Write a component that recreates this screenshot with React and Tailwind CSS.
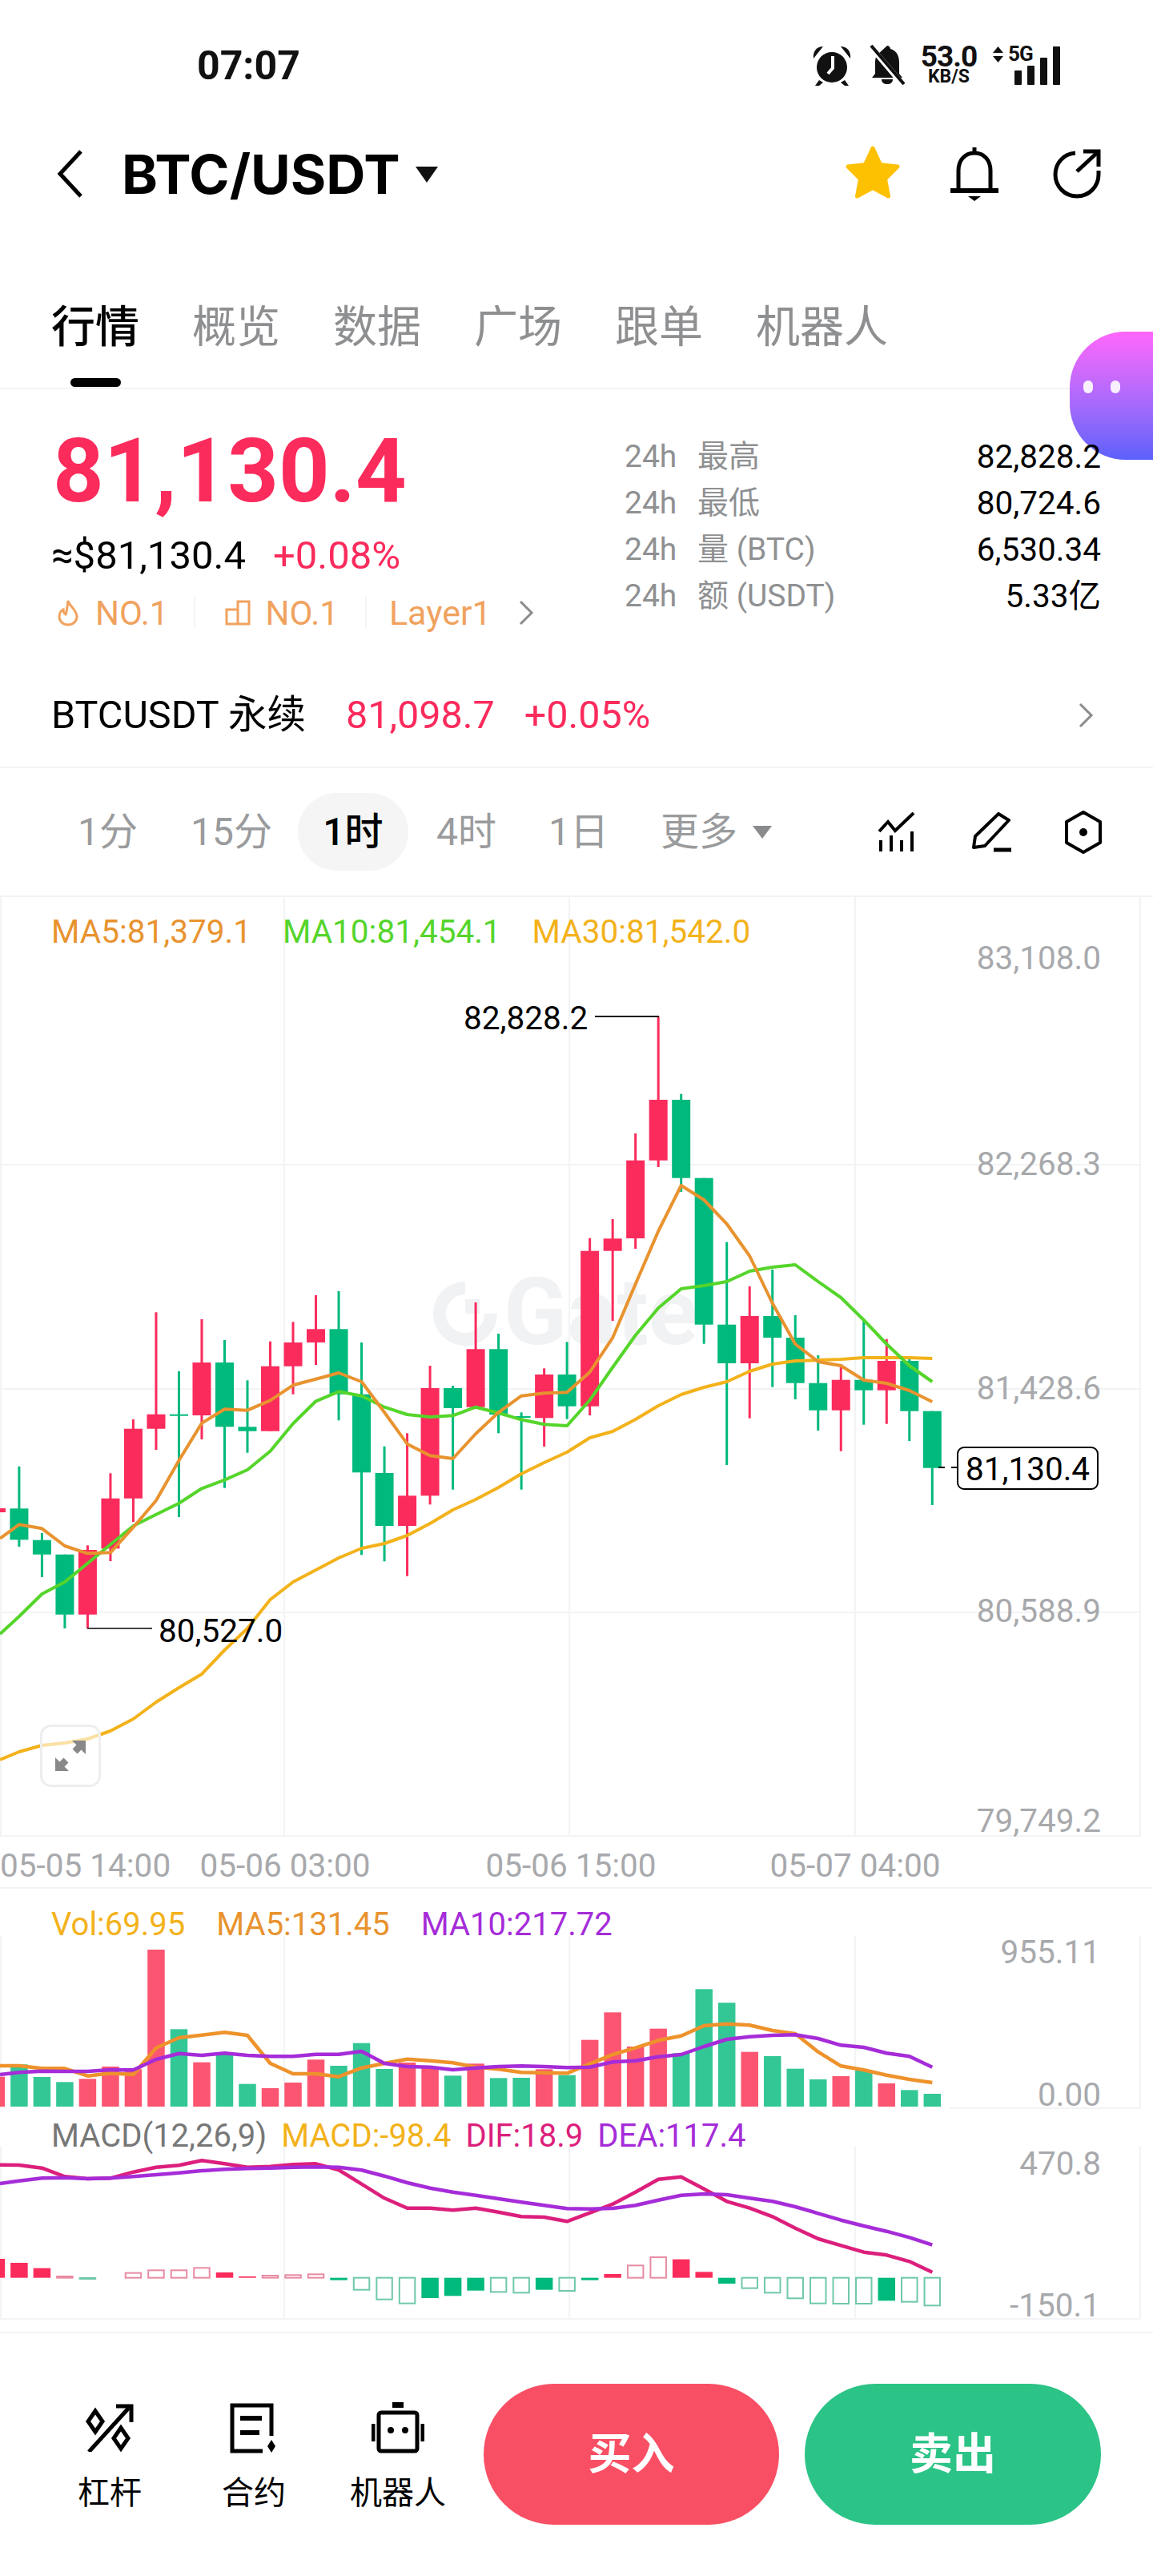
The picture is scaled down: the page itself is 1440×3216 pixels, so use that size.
import React from 'react';

const RED = '#fb2b5c';
const GREEN = '#00b97c';
const AXIS = '#a8a9ac';
const xi = (i) => 23.9 + 28.51 * i;

// [index colour, body top, body bottom, wick top, wick bottom]
const candles = [
  ['r', 1883, 1888, 1883, 1888], ['g', 1883.3, 1922.3, 1830.7, 1931], ['g', 1922.7, 1940.7, 1914, 1969],
  ['g', 1940.7, 2015.7, 1940.7, 2033], ['r', 1935, 2015.7, 1929.3, 2033], ['r', 1870.7, 1933.3, 1839.3, 1949],
  ['r', 1783.7, 1870.7, 1772, 1900], ['r', 1765.7, 1783.7, 1638.3, 1810], ['g', 1765.7, 1767, 1712, 1894],
  ['r', 1701, 1767, 1647, 1797], ['g', 1701, 1781.3, 1673, 1857.7], ['g', 1781.3, 1786.7, 1723.3, 1813.7],
  ['r', 1705.7, 1786.7, 1674.7, 1786.7], ['r', 1676, 1705.7, 1650.3, 1740.7], ['r', 1659.3, 1676, 1617, 1704],
  ['g', 1659.3, 1740.7, 1612, 1773.3], ['g', 1740.7, 1838.3, 1676, 1941.3], ['g', 1839, 1905, 1805.7, 1949.3],
  ['r', 1867.3, 1905, 1789.3, 1967.7], ['r', 1733, 1867.3, 1705, 1878.3], ['g', 1733, 1758, 1730, 1859.7],
  ['r', 1684.3, 1756.7, 1626, 1756.7], ['g', 1684.3, 1766, 1665, 1789.3], ['g', 1768, 1769.3, 1763.3, 1859.7],
  ['r', 1716, 1770.3, 1708.3, 1806], ['g', 1716, 1755.7, 1675.3, 1771.7], ['r', 1561.7, 1755.7, 1545.7, 1767],
  ['r', 1546.3, 1561.7, 1522, 1649], ['r', 1448.7, 1546, 1415, 1559], ['r', 1373, 1448.7, 1269, 1457],
  ['g', 1373, 1470.7, 1365.7, 1488], ['g', 1470.7, 1653.7, 1470.7, 1677.7], ['g', 1653.7, 1702, 1550.7, 1829],
  ['r', 1643, 1702, 1606, 1770.7], ['g', 1643, 1670, 1585, 1731.7], ['g', 1670, 1726.7, 1642, 1747],
  ['g', 1726.7, 1760.7, 1692, 1786], ['r', 1722.7, 1760.7, 1703, 1811.7], ['g', 1722.7, 1735.7, 1648, 1778.7],
  ['r', 1699, 1735.7, 1671.7, 1777.7], ['g', 1699, 1761.7, 1697, 1799], ['g', 1761.7, 1832.7, 1761.7, 1879],
];

const ma5 = [1920.7, 1903.3, 1908.3, 1930, 1939.3, 1938.3, 1906.7, 1873.3, 1823.3, 1776.7, 1759.3, 1760.7, 1748.3, 1729.3, 1721.7, 1714, 1725, 1763.3, 1802.7, 1817.3, 1821, 1790, 1763.3, 1742.7, 1739.3, 1738.3, 1713, 1670, 1603, 1537, 1480, 1498, 1528, 1568, 1627, 1678, 1700, 1705, 1723, 1727, 1736, 1750];
const ma10 = [2040, 2018, 1990, 1975, 1951.7, 1928.3, 1905, 1890.7, 1876.7, 1858.3, 1847.7, 1835, 1811.7, 1777.3, 1749.3, 1737.3, 1742.7, 1756.7, 1766, 1769, 1767.3, 1756.7, 1764, 1772.3, 1778.3, 1780, 1748, 1707, 1667, 1633, 1609, 1605, 1600, 1587, 1582, 1579, 1600, 1620, 1648, 1678, 1705, 1725];
const ma30 = [2197, 2187, 2179, 2176, 2171, 2161, 2146, 2125, 2107, 2090, 2060, 2033, 1997, 1975, 1960, 1945, 1933, 1927, 1917, 1902, 1885, 1872, 1857, 1840, 1826, 1813, 1795, 1787, 1772, 1755, 1741, 1732, 1725, 1712, 1703, 1699, 1698, 1697, 1695, 1695, 1695, 1696];

// volume bars: colour + top, measured against the crop at y=2340 (3x)
const vols = [['r', 758], ['g', 712], ['g', 759], ['g', 778], ['r', 766], ['r', 720], ['r', 730], ['r', 282], ['g', 580], ['r', 704], ['g', 670], ['g', 785], ['r', 801], ['r', 780], ['r', 694], ['g', 717], ['g', 632], ['g', 729], ['r', 705], ['r', 722], ['g', 754], ['r', 709], ['g', 763], ['g', 762], ['r', 730], ['g', 752], ['r', 620], ['r', 517], ['r', 645], ['r', 578], ['g', 670], ['g', 430], ['g', 481], ['r', 665], ['g', 681], ['g', 728], ['g', 768], ['r', 756], ['g', 735], ['r', 783], ['g', 808], ['g', 822]];
const volMa5 = [717, 717, 727, 727, 755, 745, 750, 650, 612, 602, 592, 603, 708, 747, 747, 758, 725, 708, 692, 698, 706, 722, 730, 742, 743, 745, 710, 675, 650, 622, 605, 567, 560, 565, 585, 597, 665, 718, 733, 752, 768, 780];
const volMa10 = [750, 742, 737, 738, 738, 732, 733, 693, 671, 678, 670, 678, 682, 682, 674, 674, 663, 708, 720, 722, 732, 725, 720, 718, 720, 724, 722, 703, 698, 683, 675, 645, 618, 608, 603, 601, 615, 640, 648, 670, 682, 722];

// macd: [colour, filled, top, bottom], crop at y=2640 (3x)
const hist = [['r', 1, 540, 611], ['r', 1, 555, 611], ['r', 1, 575, 611], ['r', 0, 606, 611], ['g', 0, 612, 615], null, ['r', 0, 593, 611], ['r', 0, 583, 611], ['r', 0, 583, 611], ['r', 0, 574, 611], ['r', 1, 591, 611], ['r', 1, 606, 611], ['r', 0, 603, 611], ['r', 0, 601, 611], ['r', 0, 598, 611], ['g', 1, 611, 620], ['g', 0, 611, 656], ['g', 0, 611, 692], ['g', 0, 611, 707], ['g', 1, 611, 687], ['g', 1, 611, 679], ['g', 1, 611, 659], ['g', 0, 611, 664], ['g', 0, 611, 667], ['g', 1, 611, 656], ['g', 0, 611, 660], ['g', 1, 611, 620], ['r', 1, 597, 611], ['r', 0, 565, 611], ['r', 0, 534, 611], ['r', 1, 542, 611], ['r', 1, 589, 611], ['g', 1, 611, 633], ['g', 0, 611, 650], ['g', 0, 611, 667], ['g', 0, 611, 688], ['g', 0, 611, 707], ['g', 0, 611, 708], ['g', 0, 611, 708], ['g', 1, 611, 697], ['g', 0, 611, 701], ['g', 0, 611, 715]];
const dif = [188, 189, 200, 232, 240, 238, 215, 197, 190, 172, 184, 197, 194, 187, 184, 207, 260, 313, 350, 350, 358, 350, 365, 382, 384, 400, 368, 335, 290, 242, 233, 278, 325, 350, 382, 425, 465, 490, 515, 526, 550, 590];
const dea = [258, 248, 238, 236, 240, 238, 232, 225, 218, 210, 205, 202, 200, 197, 196, 197, 208, 230, 255, 275, 290, 302, 315, 328, 340, 352, 353, 351, 340, 320, 302, 297, 300, 313, 325, 345, 370, 395, 417, 437, 460, 488];

const points = (arr, toY = (v) => v) => arr.map((v, k) => `${k === 0 ? 0 : xi(k - 1).toFixed(1)},${toY(v).toFixed(1)}`).join(' ');

function Grid({ top, bottom, rows = [] }) {
  return (
    <g stroke="#f2f3f5" strokeWidth="2">
      {[1, 355, 711, 1068, 1424].map((x) => <line key={x} x1={x} x2={x} y1={top} y2={bottom} />)}
      {rows.map((y) => <line key={y} x1="0" x2="1424" y1={y} y2={y} />)}
    </g>
  );
}

function AxisText({ x, y, children, anchor = 'end', fill = AXIS }) {
  return <text x={x} y={y} textAnchor={anchor} dominantBaseline="central" fontSize="40.5" fill={fill}>{children}</text>;
}

function MainChart() {
  return (
    <div className="relative h-[1240px] border-b-2 border-[#f2f3f5]">
      <svg viewBox="0 1118 1440 1240" className="block w-[1440px] h-[1240px]">
        <line x1="0" x2="1440" y1="1119" y2="1119" stroke="#f2f3f5" strokeWidth="2" />
        <Grid top={1120} bottom={2292} rows={[1454, 1734, 2013, 2292]} />
        <g>
          <path d="M581 1608a32 32 0 1 0 32 32" fill="none" stroke="#f1f2f3" strokeWidth="16" />
          <rect x="581" y="1622" width="18" height="18" fill="#f1f2f3" />
          <text x="629" y="1678" fontSize="116" fontWeight="700" fill="#f1f2f3">Gate</text>
        </g>
        {candles.map(([c, t, b, wt, wb], k) => {
          const x = xi(k - 1);
          const fill = c === 'r' ? RED : GREEN;
          return (
            <g key={k} fill={fill}>
              <rect x={x - 1.5} y={wt} width="3" height={wb - wt} />
              <rect x={x - 11.5} y={t} width="23" height={Math.max(b - t, 2)} />
            </g>
          );
        })}
        <polyline points={points(ma30)} fill="none" stroke="#f3b21b" strokeWidth="4" strokeLinejoin="round" />
        <polyline points={points(ma10)} fill="none" stroke="#55d52b" strokeWidth="4" strokeLinejoin="round" />
        <polyline points={points(ma5)} fill="none" stroke="#e8932f" strokeWidth="4" strokeLinejoin="round" />
        <AxisText x="1375" y="1196">83,108.0</AxisText>
        <AxisText x="1375" y="1453">82,268.3</AxisText>
        <AxisText x="1375" y="1733">81,428.6</AxisText>
        <AxisText x="1375" y="2011">80,588.9</AxisText>
        <AxisText x="1375" y="2273">79,749.2</AxisText>
        <AxisText x="0" y="2329" anchor="start">05-05 14:00</AxisText>
        <AxisText x="356" y="2329" anchor="middle">05-06 03:00</AxisText>
        <AxisText x="713" y="2329" anchor="middle">05-06 15:00</AxisText>
        <AxisText x="1068" y="2329" anchor="middle">05-07 04:00</AxisText>
        <AxisText x="579" y="1271" anchor="start" fill="#000">82,828.2</AxisText>
        <line x1="743" x2="823" y1="1269" y2="1269" stroke="#111" strokeWidth="2" />
        <AxisText x="198" y="2036" anchor="start" fill="#000">80,527.0</AxisText>
        <line x1="109" x2="190" y1="2033" y2="2033" stroke="#444" strokeWidth="2" />
        <line x1="1172" x2="1196" y1="1832" y2="1832" stroke="#000" strokeWidth="2" strokeDasharray="8 8" />
        <rect x="1196" y="1807" width="175" height="52" rx="8" fill="#fff" stroke="#000" strokeWidth="2" />
        <AxisText x="1283.5" y="1834" anchor="middle" fill="#000">81,130.4</AxisText>
      </svg>
      <div className="absolute left-[64px] top-[23px] flex gap-[39px] text-[40.5px] leading-[44px]">
        <span className="text-[#e8932f]">MA5:81,379.1</span>
        <span className="text-[#55d52b]">MA10:81,454.1</span>
        <span className="text-[#f3b21b]">MA30:81,542.0</span>
      </div>
      <button className="absolute left-[50px] top-[1035px] w-[76px] h-[78px] rounded-[14px] border-[3px] border-[#eeeeee] bg-white/60 flex items-center justify-center">
        <svg width="38" height="38" viewBox="0 0 38 38" fill="#888">
          <path d="M21 0h17v17l-5.5-5.5-5 5-6-6 5-5zM0 38V21l5.5 5.5 5-5 6 6-5 5L17 38z" />
        </svg>
      </button>
    </div>
  );
}

function VolChart() {
  const y = (v) => 2340 + v / 3;
  return (
    <div className="relative h-[287px]">
      <svg viewBox="0 2358 1440 287" className="block w-[1440px] h-[287px]">
        <Grid top={2417} bottom={2632} />
        <line x1="1186" x2="1424" y1="2632" y2="2632" stroke="#f2f3f5" strokeWidth="2" />
        {vols.map(([c, t], k) => {
          const left = Math.max(xi(k - 1) - 10.75, 0);
          const right = xi(k - 1) + 10.75;
          return <rect key={k} x={left} y={y(t)} width={right - left} height={2630 - y(t)} fill={c === 'r' ? '#fb5572' : '#33c796'} />;
        })}
        <polyline points={points(volMa5, y)} fill="none" stroke="#ee922b" strokeWidth="4.5" strokeLinejoin="round" />
        <polyline points={points(volMa10, y)} fill="none" stroke="#a52cd8" strokeWidth="4.5" strokeLinejoin="round" />
        <AxisText x="1374" y="2437">955.11</AxisText>
        <AxisText x="1375" y="2615">0.00</AxisText>
      </svg>
      <div className="absolute left-[64px] top-[23px] flex gap-[39px] text-[40px] leading-[44px]">
        <span className="text-[#f3b21b]">Vol:69.95</span>
        <span className="text-[#e8932f]">MA5:131.45</span>
        <span className="text-[#a52cd8]">MA10:217.72</span>
      </div>
    </div>
  );
}

function MacdChart() {
  const y = (v) => 2640 + v / 3;
  return (
    <div className="relative h-[268px] border-b-2 border-[#f2f3f5]">
      <svg viewBox="0 2645 1440 266" className="block w-[1440px] h-[266px]">
        <Grid top={2680} bottom={2895} rows={[2895]} />
        {hist.map((h, k) => {
          if (!h) return null;
          const [c, filled, t, b] = h;
          const left = Math.max(xi(k - 1) - 10.75, 0);
          const width = xi(k - 1) + 10.75 - left;
          if (filled) return <rect key={k} x={left} y={y(t)} width={width} height={y(b) - y(t)} fill={c === 'r' ? RED : GREEN} />;
          return <rect key={k} x={left + 1} y={y(t)} width={width - 2} height={y(b) - y(t)} fill="none" stroke={c === 'r' ? '#e88ba3' : '#6fc8ab'} strokeWidth="2" />;
        })}
        <polyline points={points(dif, y)} fill="none" stroke="#dc1f7c" strokeWidth="4.5" strokeLinejoin="round" />
        <polyline points={points(dea, y)} fill="none" stroke="#a52cd8" strokeWidth="4.5" strokeLinejoin="round" />
        <AxisText x="1375" y="2701">470.8</AxisText>
        <AxisText x="1374" y="2878">-150.1</AxisText>
      </svg>
      <div className="absolute left-[64px] top-0 flex gap-[18px] text-[40px] leading-[44px]">
        <span className="text-[#777777]">MACD(12,26,9)</span>
        <span className="text-[#f3b21b]">MACD:-98.4</span>
        <span className="text-[#dc1f7c]">DIF:18.9</span>
        <span className="text-[#a52cd8]">DEA:117.4</span>
      </div>
    </div>
  );
}

function StatusBar() {
  return (
    <div className="h-[150px] flex justify-between text-[#111]">
      <span className="ml-[246px] mt-[56px] text-[50px] leading-[52px] font-bold">07:07</span>
      <div className="flex items-start mr-[113px] mt-[56px]">
        <svg width="52" height="52" viewBox="0 0 50 52" fill="#111">
          <circle cx="25" cy="28" r="19" />
          <path d="M2 17C1 8 6 2 14 2zM48 17c1-9-4-15-12-15zM9 44l-5 7h5l5-4zM41 44l5 7h-5l-5-4z" />
          <path d="M26 14v15l-6 7" stroke="#fff" strokeWidth="4" fill="none" />
        </svg>
        <svg className="ml-[20px]" width="46" height="50" viewBox="0 0 46 50" fill="#111">
          <path d="M23 1c2 0 4 2 4 4 8 2 11 9 11 17v14l4 5H4l4-5V22c0-3 .5-6 2-9z" />
          <path d="M16 43h14c0 4-3 6-7 6s-7-2-7-6z" />
          <path d="M2 2l40 47" stroke="#fff" strokeWidth="7" />
          <path d="M3 1l41 48" stroke="#111" strokeWidth="4" />
        </svg>
        <div className="ml-[15px] w-[78px] flex flex-col items-center font-bold">
          <span className="text-[37px] leading-[30px] tracking-[-1px]">53.0</span>
          <span className="text-[23px] leading-[20px]">KB/S</span>
        </div>
        <div className="relative ml-[16px] w-[87px] h-[50px]">
          <svg className="absolute left-0 top-[2px]" width="13" height="20" viewBox="0 0 13 20" fill="#111">
            <path d="M6.5 0L13 8H0zM6.5 20L0 12h13z" />
          </svg>
          <span className="absolute left-[19px] top-[-2px] text-[26px] leading-[26px] font-bold tracking-[-1px]">5G</span>
          <div className="absolute left-[27px] bottom-0 flex items-end gap-[7px]">
            <i className="block w-[9px] h-[18px] bg-[#111] rounded-[1px]" />
            <i className="block w-[9px] h-[24px] bg-[#111] rounded-[1px]" />
            <i className="block w-[9px] h-[34px] bg-[#111] rounded-[1px]" />
            <i className="block w-[9px] h-[48px] bg-[#111] rounded-[1px]" />
          </div>
        </div>
      </div>
    </div>
  );
}

function NavBar() {
  return (
    <div className="h-[134px] flex items-center text-black">
      <svg className="ml-[69px]" width="36" height="62" viewBox="0 0 36 62" fill="none" stroke="#000" strokeWidth="5">
        <path d="M32 3L6 31l26 28" />
      </svg>
      <span className="ml-[47px] text-[68px] leading-none font-['Inter','Noto_Sans_CJK_SC',sans-serif] font-bold">BTC/USDT</span>
      <svg className="ml-[19px] mt-[2px]" width="28" height="20" viewBox="0 0 28 20" fill="#111">
        <path d="M0 0h28L14 20z" />
      </svg>
      <svg className="ml-auto mt-[-4px]" width="70" height="68" viewBox="0 0 70 68" fill="#fdc102" stroke="#fdc102" strokeWidth="5" strokeLinejoin="round">
        <path d="M35 4l9.5 20.5L66 27 50.5 42.5 54.5 64 35 53.5 15.5 64l4-21.5L4 27l21.5-2.5z" />
      </svg>
      <svg className="ml-[60px]" width="64" height="68" viewBox="0 0 64 68" fill="none" stroke="#000" strokeWidth="5">
        <path d="M32 1v7" />
        <path d="M12 55V30C12 17 20 8 32 8s20 9 20 22v25" />
        <path d="M2 55h60" strokeWidth="6" />
        <path d="M24 62h16l-8 6z" fill="#000" stroke="none" />
      </svg>
      <svg className="ml-[66px] mr-[65px]" width="60" height="62" viewBox="0 0 60 62" fill="none" stroke="#000" strokeWidth="5">
        <path d="M28 5C13 6 3 18 3 32c0 15 12 27 27 27s27-12 27-27V27" />
        <path d="M30 28L56 4" />
        <path d="M38 3h19v19" />
      </svg>
    </div>
  );
}

function Tabs() {
  const tabs = ['概览', '数据', '广场', '跟单', '机器人'];
  return (
    <div className="relative h-[202px] border-b-2 border-[#f2f3f5]">
      <div className="flex gap-[66px] pl-[64px] pt-[92px] text-[55px] leading-[64px]">
        <span className="text-black font-medium">行情</span>
        {tabs.map((t) => <span key={t} className="text-[#8e8f91]">{t}</span>)}
      </div>
      <div className="absolute left-[88px] bottom-[1px] w-[63px] h-[11px] rounded-full bg-black" />
    </div>
  );
}

function Stat({ tag, name, value }) {
  return (
    <div className="h-[58px] flex items-center text-[39px]">
      <span className="w-[91px] text-[#8f9092]">{tag}</span>
      <span className="text-[#8f9092]">{name}</span>
      <span className="ml-auto text-[40.5px] text-black">{value}</span>
    </div>
  );
}

function PriceBlock() {
  return (
    <div>
      <div className="flex h-[343px]">
        <div className="pl-[66px] w-[780px]">
          <div className="mt-[47px] h-[110px] flex items-center text-[111px] leading-none font-bold text-[#fb2b5c]">81,130.4</div>
          <div className="mt-[21px] h-[60px] ml-[-2px] flex items-center text-[49px]">
            <span className="text-black">≈$81,130.4</span>
            <span className="ml-[34px] text-[#fb2b5c]">+0.08%</span>
          </div>
          <div className="mt-[21px] h-[40px] flex items-center text-[42px] text-[#f0a25e]">
            <svg className="ml-[5px]" width="28" height="34" viewBox="0 0 28 34" fill="none" stroke="#f0a25e" strokeWidth="3">
              <path d="M14 2c1 6 11 11 11 20a11 10 0 0 1-22 0c0-5 3-8 5-9 0 3 1 5 3 6 2-5 2-11 3-17z" />
            </svg>
            <span className="ml-[20px]">NO.1</span>
            <i className="block ml-[32px] w-[2px] h-[40px] bg-[#f4f4f4]" />
            <svg className="ml-[37px]" width="32" height="32" viewBox="0 0 32 32" fill="none" stroke="#f0a25e" strokeWidth="3">
              <path d="M2 12h14v18H2zM16 30V2h14v28z" />
            </svg>
            <span className="ml-[18px]">NO.1</span>
            <i className="block ml-[33px] w-[2px] h-[40px] bg-[#f4f4f4]" />
            <span className="ml-[28px] text-[43px]">Layer1</span>
            <svg className="ml-[33px]" width="20" height="32" viewBox="0 0 20 32" fill="none" stroke="#8a8b8d" strokeWidth="3">
              <path d="M3 2l14 14L3 30" />
            </svg>
          </div>
        </div>
        <div className="relative z-10 w-[595px] pt-[55px]">
          <Stat tag="24h" name="最高" value="82,828.2" />
          <Stat tag="24h" name="最低" value="80,724.6" />
          <Stat tag="24h" name="量 (BTC)" value="6,530.34" />
          <Stat tag="24h" name="额 (USDT)" value="5.33亿" />
        </div>
      </div>
      <div className="h-[130px] pl-[64px] pr-[74px] flex items-center text-[48.5px] border-b-2 border-[#f2f3f5]">
        <span className="text-black">BTCUSDT 永续</span>
        <span className="ml-[50px] text-[#fb2b5c]">81,098.7</span>
        <span className="ml-[37px] text-[#fb2b5c]">+0.05%</span>
        <svg className="ml-auto" width="20" height="32" viewBox="0 0 20 32" fill="none" stroke="#8a8b8d" strokeWidth="3">
          <path d="M3 2l14 14L3 30" />
        </svg>
      </div>
    </div>
  );
}

function Intervals() {
  return (
    <div className="h-[159px] flex items-center text-[48px] text-[#9a9b9d]">
      <span className="ml-[97px]">1分</span>
      <span className="ml-[66px]">15分</span>
      <span className="ml-[32px] w-[138px] h-[97px] rounded-full bg-[#f5f5f5] text-black font-medium flex items-center justify-center">1时</span>
      <span className="ml-[35px]">4时</span>
      <span className="ml-[65px]">1日</span>
      <span className="ml-[65px]">更多</span>
      <svg className="ml-[19px]" width="24" height="16" viewBox="0 0 24 16" fill="#8a8b8d">
        <path d="M0 0h24L12 16z" />
      </svg>
      <svg className="ml-auto" width="48" height="50" viewBox="0 0 48 50" fill="none" stroke="#000" strokeWidth="4">
        <path d="M2 24l11-12 9 11L45 1" />
        <path d="M4 35v14M17 29v20M30 35v14M43 24v25" />
      </svg>
      <svg className="ml-[69px]" width="52" height="50" viewBox="0 0 52 50" fill="none" stroke="#000" strokeWidth="4">
        <path d="M34 2l13 8-30 32-14 2 2-14z" strokeLinejoin="round" />
        <path d="M28 47h22" strokeWidth="5" />
      </svg>
      <svg className="ml-[64px] mr-[63px]" width="48" height="54" viewBox="0 0 48 54" fill="none" stroke="#000" strokeWidth="4">
        <path d="M24 2l21 12v26L24 52 3 40V14z" strokeLinejoin="round" />
        <circle cx="24" cy="27" r="5" fill="#000" stroke="none" />
      </svg>
    </div>
  );
}

function ToolButton({ label, children }) {
  return (
    <div className="w-[180px] flex flex-col items-center mt-[23px] text-black">
      <div className="h-[64px] flex items-center">{children}</div>
      <span className="mt-[26px] text-[40px] leading-[48px]">{label}</span>
    </div>
  );
}

function BottomBar() {
  return (
    <div className="h-[303px] pl-[47px] pt-[63px] flex items-start">
      <ToolButton label="杠杆">
        <svg width="60" height="60" viewBox="0 0 60 60" fill="none" stroke="#000" strokeWidth="5">
          <path d="M4 60L54 5" />
          <path d="M38 3h19v20" />
          <path d="M12 9l9 13-9 13-9-13zM44 30l9 13-9 13-9-13z" />
        </svg>
      </ToolButton>
      <ToolButton label="合约">
        <svg width="62" height="64" viewBox="0 0 62 64" fill="none" stroke="#000" strokeWidth="5">
          <path d="M53 42V4H4v57h38" />
          <path d="M14 20h27M14 38h24" strokeWidth="6" />
          <path d="M53 47l5 8-5 8-5-8z" fill="#000" stroke="none" />
        </svg>
      </ToolButton>
      <ToolButton label="机器人">
        <svg width="66" height="64" viewBox="0 0 66 64" fill="none" stroke="#000" strokeWidth="5">
          <rect x="26" y="0" width="14" height="7" fill="#000" stroke="none" />
          <rect x="9" y="13" width="48" height="48" rx="3" />
          <path d="M2 27v22M64 27v22" />
          <circle cx="24" cy="35" r="4" fill="#000" stroke="none" />
          <circle cx="42" cy="35" r="4" fill="#000" stroke="none" />
        </svg>
      </ToolButton>
      <button className="ml-[17px] w-[369px] h-[176px] rounded-full bg-[#f94f64] text-white text-[54px] font-bold">买入</button>
      <button className="ml-[32px] w-[370px] h-[176px] rounded-full bg-[#2cc386] text-white text-[54px] font-bold">卖出</button>
    </div>
  );
}

export default function App() {
  return (
    <div className="relative w-[1440px] h-[3216px] overflow-hidden bg-white font-['Roboto','Noto_Sans_CJK_SC',sans-serif]">
      <StatusBar />
      <NavBar />
      <Tabs />
      <PriceBlock />
      <Intervals />
      <MainChart />
      <VolChart />
      <MacdChart />
      <BottomBar />
      {/* floating assistant bubble */}
      <div className="absolute left-[1336px] top-[414px] w-[104px] h-[160px] rounded-tl-[70px] rounded-bl-[70px] bg-gradient-to-b from-[#ff66fb] to-[#5c60fb] flex items-start gap-[22px] pl-[17px] pt-[61px]">
        <i className="block w-[12px] h-[16px] rounded-full bg-white/90" />
        <i className="block w-[12px] h-[16px] rounded-full bg-white/90" />
      </div>
    </div>
  );
}
